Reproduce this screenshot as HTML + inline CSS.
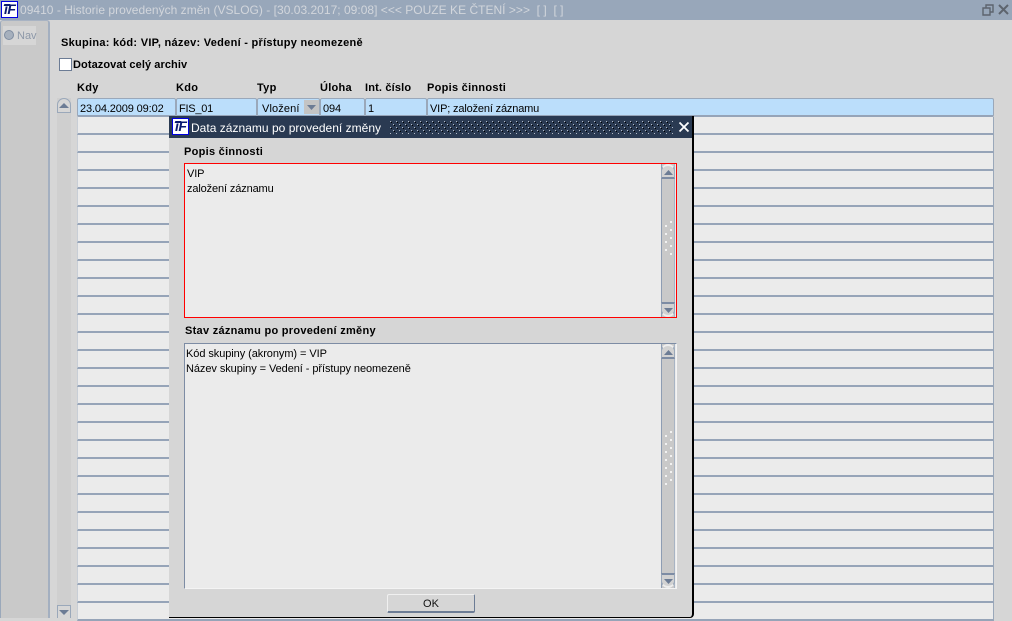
<!DOCTYPE html>
<html><head><meta charset="utf-8"><style>
html,body{margin:0;padding:0}
body{width:1012px;height:618px;overflow:hidden;position:relative;background:#d6d6d6;font-family:"Liberation Sans",sans-serif;font-size:11px;color:#000}
div,span.a{position:absolute;box-sizing:border-box;white-space:nowrap}
.b{font-weight:bold;letter-spacing:.28px}
.r{left:77px;width:917px;height:18px;background:#ebebeb;border-right:1px solid #9aa8ba;border-bottom:2px solid #96a4b8;border-left:1px solid #c8ced6}
.c{top:98px;height:19px;background:#bbdefb;border:1px solid #9aa8ba;border-bottom:2px solid #96a4b8;border-radius:2px;line-height:19px;padding-left:2px;padding-top:1px;letter-spacing:-.13px}
.t{letter-spacing:-.07px;line-height:14px}
.sb{left:661px;width:14px;background:#c9c9c9;border-left:1px solid #8e9db3;border-right:1px solid #a8b4c4}
.ub{left:661px;width:14px;height:15px;background:#d2d2d2;border:1px solid #9aa8ba;border-bottom:2px solid #7d8ca4;border-top:2px solid #eee;border-radius:7px 7px 0 0}
.db{left:661px;width:14px;height:15px;background:#d2d2d2;border:1px solid #9aa8ba;border-top:2px solid #7d8ca4;border-bottom:2px solid #eee;border-radius:0 0 7px 7px}
.logo{width:17px;height:17px;background:#fff;border:1px solid #0000e0}
.logo span{left:2px;top:0;font:italic bold 14px/15px 'Liberation Sans',sans-serif;color:#0a1a70;letter-spacing:-.5px}
.logo i{position:absolute;left:2px;top:2px;width:6px;height:2px;background:#0a1a70;transform:skewX(-20deg)}
svg{position:absolute}
</style></head><body>
<div style="left:0;top:0;width:1012px;height:20px;background:#98a7ba"></div>
<div class="logo" style="left:1px;top:1px"><span class="a">iF</span><i></i></div>
<div style="left:20px;top:2px;color:#d2d6dc;font-size:12px;line-height:16px;letter-spacing:.02px">09410 - Historie provedených změn (VSLOG) - [30.03.2017; 09:08] &lt;&lt;&lt; POUZE KE ČTENÍ &gt;&gt;&gt;&nbsp; [ ]&nbsp; [ ]</div>
<svg style="left:982px;top:3px" width="30" height="13" viewBox="0 0 30 13" fill="none" stroke="#5d646e" stroke-width="1.4"><path d="M1 5h7v7H1zM4 5V2h7v7H8"/><path d="M17 2l9 9M26 2l-9 9" stroke-width="2"/></svg>

<div style="left:0;top:20px;width:50px;height:598px;background:#c9c9c9;border-left:1px solid #9aa8ba;border-right:2px solid #a3afc0;border-top:1px solid #a8b3c3;border-radius:3px 3px 0 0"></div>
<div style="left:3px;top:26px;width:33px;height:19px;background:#d6d6d6"></div>
<div style="left:4px;top:30px;width:10px;height:10px;border-radius:50%;background:#a6b0bd;border:1px solid #7f8da1"></div>
<div style="left:17px;top:30px;color:#8d98a8;line-height:13px;letter-spacing:0">Nav</div>

<div class="b" style="left:61px;top:36px;line-height:14px">Skupina: kód: VIP, název: Vedení - přístupy neomezeně</div>
<div style="left:59px;top:58px;width:13px;height:13px;background:#fff;border:1px solid #6c7c95"></div>
<div class="b" style="left:73px;top:58px;line-height:14px;letter-spacing:.08px">Dotazovat celý archiv</div>
<div class="b" style="left:77px;top:81px;line-height:14px">Kdy</div>
<div class="b" style="left:176px;top:81px;line-height:14px">Kdo</div>
<div class="b" style="left:257px;top:81px;line-height:14px">Typ</div>
<div class="b" style="left:320px;top:81px;line-height:14px">Úloha</div>
<div class="b" style="left:365px;top:81px;line-height:14px;letter-spacing:.16px">Int. číslo</div>
<div class="b" style="left:427px;top:81px;line-height:14px">Popis činnosti</div>

<div style="left:57px;top:98px;width:14px;height:520px;background:#cfcfcf"></div>
<div style="left:57px;top:98px;width:14px;height:15px;background:#d6d6d6;border:1px solid #9aa8ba;border-radius:7px 7px 0 0"></div>
<svg style="left:59px;top:103px" width="10" height="6"><path d="M0 5L5 0l5 5z" fill="#6c7c95"/></svg>
<div style="left:57px;top:605px;width:14px;height:13px;background:#d6d6d6;border:1px solid #9aa8ba;border-bottom:0"></div>
<svg style="left:59px;top:610px" width="10" height="5"><path d="M0 0h10L5 5z" fill="#6c7c95"/></svg>

<div class="r" style="top:117px"></div><div class="r" style="top:135px"></div><div class="r" style="top:153px"></div><div class="r" style="top:171px"></div><div class="r" style="top:189px"></div><div class="r" style="top:207px"></div><div class="r" style="top:225px"></div><div class="r" style="top:243px"></div><div class="r" style="top:261px"></div><div class="r" style="top:279px"></div><div class="r" style="top:297px"></div><div class="r" style="top:315px"></div><div class="r" style="top:333px"></div><div class="r" style="top:351px"></div><div class="r" style="top:369px"></div><div class="r" style="top:387px"></div><div class="r" style="top:405px"></div><div class="r" style="top:423px"></div><div class="r" style="top:441px"></div><div class="r" style="top:459px"></div><div class="r" style="top:477px"></div><div class="r" style="top:495px"></div><div class="r" style="top:513px"></div><div class="r" style="top:531px"></div><div class="r" style="top:549px"></div><div class="r" style="top:567px"></div><div class="r" style="top:585px"></div><div class="r" style="top:603px"></div>

<div class="c" style="left:77px;width:99px">23.04.2009 09:02</div>
<div class="c" style="left:176px;width:81px;letter-spacing:-.25px">FIS_01</div>
<div class="c" style="left:257px;width:63px;padding-left:4px;letter-spacing:.12px">Vložení</div>
<div style="left:304px;top:100px;width:15px;height:14px;background:#c4c4c4"></div>
<svg style="left:307px;top:105px" width="9" height="5"><path d="M0 0h9L4.500 5z" fill="#6c7c95"/></svg>
<div class="c" style="left:320px;width:45px">094</div>
<div class="c" style="left:365px;width:62px">1</div>
<div class="c" style="left:427px;width:567px;letter-spacing:-.16px">VIP; založení záznamu</div>

<div style="left:169px;top:116px;width:525px;height:502px;background:#d6d6d6;border-right:2px solid #000;border-bottom:1px solid #000;border-radius:0 0 4px 0"></div>
<div style="left:169px;top:116px;width:523px;height:22px;background:#2a3a52"></div>
<div class="logo" style="left:172px;top:118px"><span class="a">iF</span><i></i></div>
<div style="left:191px;top:120px;color:#fff;font-size:12px;line-height:16px;letter-spacing:.02px">Data záznamu po provedení změny</div>
<svg style="left:389px;top:120px" width="284" height="14"><defs><pattern id="p" width="6" height="6" patternUnits="userSpaceOnUse"><rect x="1" y="1" width="1" height="1" fill="#b4bcc8"/><rect x="2" y="2" width="1" height="1" fill="#000"/><rect x="4" y="4" width="1" height="1" fill="#b4bcc8"/><rect x="5" y="5" width="1" height="1" fill="#000"/></pattern></defs><rect width="284" height="14" fill="url(#p)"/></svg>
<svg style="left:678px;top:121px" width="12" height="12"><path d="M1.500 1.500l9 9M10.500 1.500l-9 9" stroke="#fff" stroke-width="1.800"/></svg>

<div class="b" style="left:184px;top:145px;line-height:14px">Popis činnosti</div>
<div style="left:184px;top:163px;width:493px;height:155px;background:#ebebeb;border:1px solid #f00"></div>
<div class="t" style="left:187px;top:167px;letter-spacing:-.13px">VIP</div>
<div class="t" style="left:187px;top:182px;letter-spacing:-.13px">založení záznamu</div>
<div class="sb" style="top:164px;height:153px"></div>
<div class="ub" style="top:164px"></div>
<svg style="left:664px;top:170px" width="9" height="5"><path d="M0 5L4.500 0 9 5z" fill="#6c7c95"/></svg>
<div class="db" style="top:302px"></div>
<svg style="left:664px;top:308px" width="9" height="5"><path d="M0 0h9L4.500 5z" fill="#6c7c95"/></svg>
<svg style="left:664px;top:219px" width="10" height="40"><g fill="#f2f2f2"><rect x="6" y="2" width="2" height="2"/><rect x="1" y="6" width="2" height="2"/><rect x="6" y="10" width="2" height="2"/><rect x="1" y="14" width="2" height="2"/><rect x="6" y="18" width="2" height="2"/><rect x="1" y="22" width="2" height="2"/><rect x="6" y="26" width="2" height="2"/><rect x="1" y="30" width="2" height="2"/><rect x="6" y="34" width="2" height="2"/></g></svg>

<div class="b" style="left:185px;top:324px;line-height:14px">Stav záznamu po provedení změny</div>
<div style="left:184px;top:343px;width:493px;height:246px;background:#ebebeb;border-left:1px solid #7d8ca4;border-top:1px solid #7d8ca4;border-right:1px solid #f4f4f4;border-bottom:1px solid #f4f4f4"></div>
<div class="t" style="left:186px;top:347px">Kód skupiny (akronym) = VIP</div>
<div class="t" style="left:186px;top:362px">Název skupiny = Vedení - přístupy neomezeně</div>
<div class="sb" style="top:344px;height:244px"></div>
<div class="ub" style="top:344px"></div>
<svg style="left:664px;top:350px" width="9" height="5"><path d="M0 5L4.500 0 9 5z" fill="#6c7c95"/></svg>
<div class="db" style="top:573px"></div>
<svg style="left:664px;top:579px" width="9" height="5"><path d="M0 0h9L4.500 5z" fill="#6c7c95"/></svg>
<svg style="left:664px;top:429px" width="10" height="62"><g fill="#f2f2f2"><rect x="6" y="2" width="2" height="2"/><rect x="1" y="6" width="2" height="2"/><rect x="6" y="10" width="2" height="2"/><rect x="1" y="14" width="2" height="2"/><rect x="6" y="18" width="2" height="2"/><rect x="1" y="22" width="2" height="2"/><rect x="6" y="26" width="2" height="2"/><rect x="1" y="30" width="2" height="2"/><rect x="6" y="34" width="2" height="2"/><rect x="1" y="38" width="2" height="2"/><rect x="6" y="42" width="2" height="2"/><rect x="1" y="46" width="2" height="2"/><rect x="6" y="50" width="2" height="2"/><rect x="1" y="54" width="2" height="2"/></g></svg>

<div style="left:387px;top:594px;width:88px;height:19px;background:#d6d6d6;border:1px solid #f0f0f0;border-right:1px solid #6c7c95;border-bottom:2px solid #6c7c95;border-radius:2px;text-align:center;line-height:19px;color:#111">OK</div>
</body></html>
